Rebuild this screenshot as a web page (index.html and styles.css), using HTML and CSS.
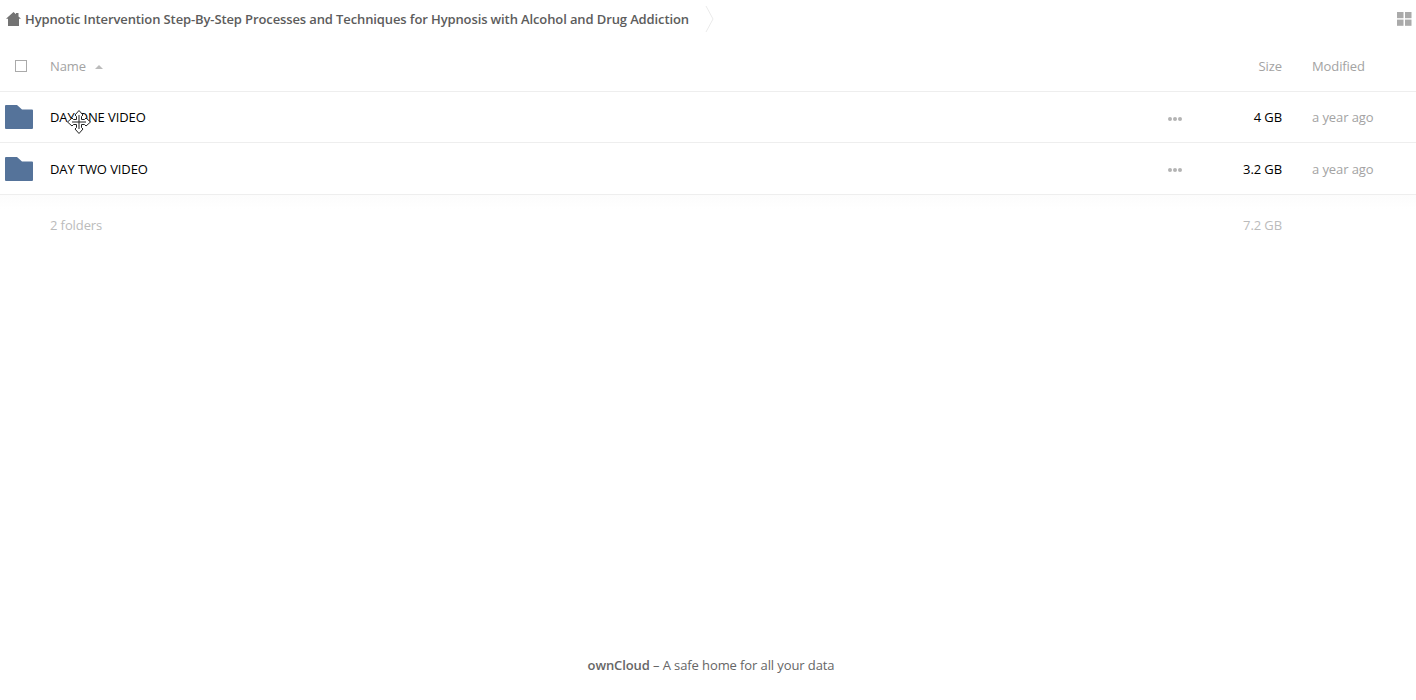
FILE: index.html
```html
<!DOCTYPE html>
<html lang="en">
<head>
    <meta charset="UTF-8">
    <title>Files - ownCloud</title>
    <link rel="stylesheet" href="styles.css">
</head>
<body>

    <div class="controls">
        <svg class="home-icon" width="15" height="14" viewBox="0 0 15 14">
            <path d="M7.5 0 L10 2.2 L10 1 L12.5 1 L12.5 4.4 L15 6.8 L13 6.8 L13 14 L2 14 L2 6.8 L0 6.8 Z"/>
        </svg>
        <span class="crumb">Hypnotic Intervention Step-By-Step Processes and Techniques for Hypnosis with Alcohol and Drug Addiction</span>
        <svg class="crumb-sep" width="9" height="26" viewBox="0 0 9 26">
            <path d="M1 0 L8 13 L1 26"/>
        </svg>
        <svg class="view-icon" width="15" height="14" viewBox="0 0 15 14">
            <rect x="0" y="0" width="6.5" height="6.2"/>
            <rect x="8" y="0" width="6.5" height="6.2"/>
            <rect x="0" y="7.6" width="6.5" height="6.2"/>
            <rect x="8" y="7.6" width="6.5" height="6.2"/>
        </svg>
    </div>

    <div class="file-table">
        <div class="row head">
            <div class="col-icon"><span class="checkbox"></span></div>
            <div class="col-name">Name <span class="sort-arrow"></span></div>
            <div class="col-size">Size</div>
            <div class="col-date">Modified</div>
        </div>

        <div class="row file">
            <div class="col-icon">
                <svg class="folder" width="28" height="24" viewBox="0 0 28 24">
                    <path d="M1 0 L12 0 L17 4.6 L27 4.6 Q28 4.6 28 5.6 L28 23 Q28 24 27 24 L1 24 Q0 24 0 23 L0 1 Q0 0 1 0 Z"/>
                </svg>
            </div>
            <div class="col-name file-name">DAY ONE VIDEO</div>
            <div class="dots"><i></i><i></i><i></i></div>
            <div class="col-size file-size">4 GB</div>
            <div class="col-date">a year ago</div>
        </div>

        <div class="row file">
            <div class="col-icon">
                <svg class="folder" width="28" height="24" viewBox="0 0 28 24">
                    <path d="M1 0 L12 0 L17 4.6 L27 4.6 Q28 4.6 28 5.6 L28 23 Q28 24 27 24 L1 24 Q0 24 0 23 L0 1 Q0 0 1 0 Z"/>
                </svg>
            </div>
            <div class="col-name file-name">DAY TWO VIDEO</div>
            <div class="dots"><i></i><i></i><i></i></div>
            <div class="col-size file-size">3.2 GB</div>
            <div class="col-date">a year ago</div>
        </div>

        <div class="row summary">
            <div class="col-icon"></div>
            <div class="col-name">2 folders</div>
            <div class="col-size">7.2 GB</div>
            <div class="col-date"></div>
        </div>
    </div>

    <footer class="footer"><b>ownCloud</b> – A safe home for all your data</footer>

    <!-- mouse pointer caught in the screenshot -->
    <svg class="move-cursor" width="24" height="24" viewBox="0 0 24 24">
        <path d="M12 0.5 L16 5 L14.5 6.5 L14.5 9.5 L17.5 9.5 L19 8 L23.5 12 L19 16 L17.5 14.5 L14.5 14.5 L14.5 17.5 L16 19 L12 23.5 L8 19 L9.5 17.5 L9.5 14.5 L6.5 14.5 L5 16 L0.5 12 L5 8 L6.5 9.5 L9.5 9.5 L9.5 6.5 L8 5 Z"/>
        <path d="M12 5 L12 19 M5 12 L19 12"/>
    </svg>

</body>
</html>
```

FILE: styles.css
```css
html, body { height: 100%; }
body { font-family: "Open Sans", sans-serif; font-size: 13px; letter-spacing: -0.1px; color: #000; background-color: #fff; margin: 0; padding: 0; display: flex; flex-direction: column; overflow: hidden; position: relative; }

.controls { height: 44px; box-sizing: border-box; padding: 0 4px 6px 6px; display: flex; align-items: center; flex-shrink: 0; }
.home-icon { fill: #737373; flex-shrink: 0; margin-right: 4px; }
.crumb { font-weight: 600; color: #5c5c5c; white-space: nowrap; letter-spacing: -0.115px; }
.crumb-sep { fill: none; stroke: #eaeaea; stroke-width: 1; margin-left: 16px; }
.view-icon { fill: #aaa; margin-left: auto; }

.row { display: flex; align-items: center; box-sizing: border-box; height: 51.5px; border-bottom: 1px solid #eee; }
.head { height: 47.75px; padding-bottom: 3.5px; color: #a3a3a3; }
.summary { height: 60px; border-bottom: none; color: #bbb; background: linear-gradient(#fcfcfc, #fff 14px); }

.col-icon { width: 50px; flex-shrink: 0; display: flex; align-items: center; }
.col-name { flex: 1; }
.col-size { width: 100px; text-align: right; }
.col-date { width: 74px; padding: 0 30px; color: #a3a3a3; }

.checkbox { display: block; width: 10px; height: 10px; border: 1px solid #aaa; margin-left: 15px; }
.sort-arrow { display: inline-block; width: 0; height: 0; border-left: 4px solid transparent; border-right: 4px solid transparent; border-bottom: 4px solid #bbb; margin-left: 6px; vertical-align: 2px; }

.folder { fill: #55739a; margin-left: 5px; display: block; }
.file-name { color: #000; }
.file-size { color: #000; }
.dots { display: flex; gap: 1px; width: 15px; flex-shrink: 0; margin-right: -1px; padding-top: 3px; }
.dots i { display: block; width: 4px; height: 4px; border-radius: 50%; background-color: #b4b4b4; }

.footer { margin-top: auto; padding: 0 0 26px 6px; text-align: center; color: #666; }
.footer b { font-weight: 600; }

.move-cursor { position: absolute; left: 67px; top: 110px; fill: #fff; stroke: #222; stroke-width: 1; }
```
